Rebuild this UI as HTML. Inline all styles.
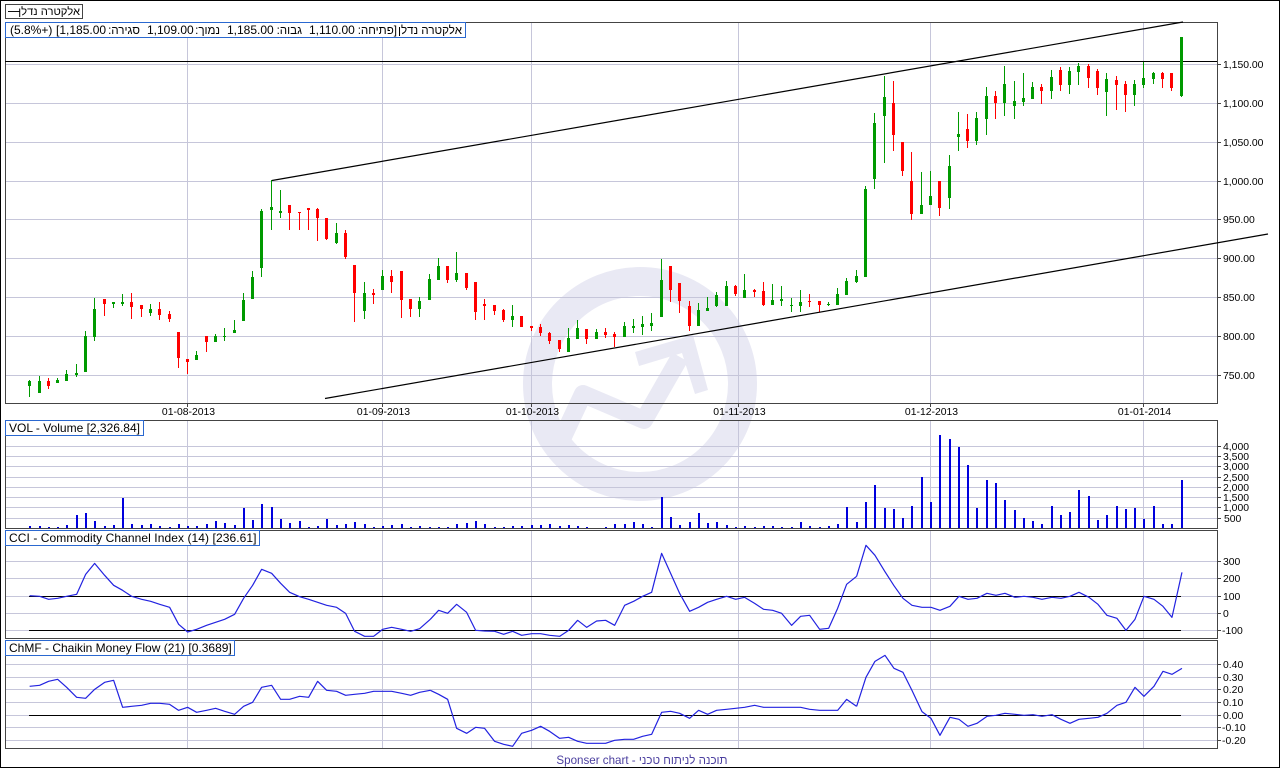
<!DOCTYPE html>
<html lang="he">
<head>
<meta charset="utf-8">
<title>Chart</title>
<style>
html,body{margin:0;padding:0;width:1280px;height:768px;overflow:hidden;background:#fff}
svg{display:block;position:absolute;left:0;top:0}
text{font-family:"Liberation Sans","Noto Sans CJK JP",sans-serif;font-size:10.4px;fill:#000;white-space:pre}
.lbl{font-size:12px}
.he{font-size:11.6px;direction:rtl;text-anchor:start}
.crisp{shape-rendering:crispEdges}
</style>
</head>
<body>
<svg width="1280" height="768" viewBox="0 0 1280 768" xmlns="http://www.w3.org/2000/svg">
<rect width="1280" height="768" fill="#fff"/>
<!-- watermark -->
<g fill="none" stroke="#e9e9f4">
<circle cx="640" cy="384" r="102.5" stroke-width="29"/>
<path d="M561 441L583 394L644 420L680 357" stroke-width="18" stroke-linejoin="round"/>
</g>
<path d="M635 352L693 335L708 390L695 394L682 353L639 366Z" fill="#e9e9f4"/>
<!-- grid -->
<g class="crisp" stroke="#c6c6da" stroke-width="1" fill="none">
<path d="M5 64.5H1217M5 103.5H1217M5 142.5H1217M5 181.5H1217M5 219.5H1217M5 258.5H1217M5 297.5H1217M5 336.5H1217M5 375.5H1217"/>
<path d="M5 446.5H1217M5 456.5H1217M5 466.5H1217M5 477.5H1217M5 487.5H1217M5 497.5H1217M5 507.5H1217M5 518.5H1217"/>
<path d="M5 561.5H1217M5 578.5H1217M5 596.5H1217M5 613.5H1217M5 630.5H1217"/>
<path d="M5 664.5H1217M5 677.5H1217M5 689.5H1217M5 702.5H1217M5 715.5H1217M5 727.5H1217M5 740.5H1217"/>
<path d="M187.5 22V403M382.5 22V403M531.5 22V403M738.5 22V403M930.5 22V403M1143.5 22V403"/>
<path d="M187.5 420V528M382.5 420V528M531.5 420V528M738.5 420V528M930.5 420V528M1143.5 420V528"/>
<path d="M187.5 530V638M382.5 530V638M531.5 530V638M738.5 530V638M930.5 530V638M1143.5 530V638"/>
<path d="M187.5 640V748M382.5 640V748M531.5 640V748M738.5 640V748M930.5 640V748M1143.5 640V748"/>
</g>
<!-- panels -->
<g class="crisp" fill="none" stroke="#444">
<rect x="5.5" y="22.5" width="1212" height="381"/>
<rect x="5.5" y="420.5" width="1212" height="108"/>
<rect x="5.5" y="530.5" width="1212" height="108"/>
<rect x="5.5" y="640.5" width="1212" height="108"/>
<path d="M1217 64.5h4M1217 103.5h4M1217 142.5h4M1217 181.5h4M1217 219.5h4M1217 258.5h4M1217 297.5h4M1217 336.5h4M1217 375.5h4"/>
<path d="M1217 446.5h4M1217 456.5h4M1217 466.5h4M1217 477.5h4M1217 487.5h4M1217 497.5h4M1217 507.5h4M1217 518.5h4"/>
<path d="M1217 561.5h4M1217 578.5h4M1217 596.5h4M1217 613.5h4M1217 630.5h4"/>
<path d="M1217 664.5h4M1217 677.5h4M1217 689.5h4M1217 702.5h4M1217 715.5h4M1217 727.5h4M1217 740.5h4"/>
<path d="M187.5 403v4M382.5 403v4M531.5 403v4M738.5 403v4M930.5 403v4M1143.5 403v4"/>
</g>
<!-- black lines -->
<g class="crisp" stroke="#000" fill="none">
<path d="M5 61.5H1217"/>
<path d="M29 596.5H1181M29 630.5H1181M29 715.5H1181"/>
</g>
<!-- green wicks -->
<path class="crisp" fill="none" stroke="#009900" stroke-width="1" d="M29.5 380V397M39.5 376V393M57.5 378V383M66.5 370V381M76.5 364V377M85.5 331V372M94.5 298V341M113.5 302V308M122.5 294V306M150.5 304V316M196.5 351V360M215.5 334V342M224.5 328V341M234.5 320V333M243.5 293V321M252.5 271V299M261.5 209V277M271.5 180V230M280.5 190V218M336.5 223V244M364.5 282V319M382.5 270V290M419.5 297V317M429.5 274V300M438.5 258V280M456.5 252V282M512.5 305V327M568.5 328V352M577.5 320V339M596.5 329V339M624.5 322V337M633.5 319V333M642.5 316V335M651.5 313V331M661.5 259V317M698.5 303V326M707.5 297V311M716.5 292V307M726.5 281V306M744.5 274V298M772.5 284V305M781.5 286V306M791.5 298V312M800.5 290V312M828.5 302V306M837.5 288V305M846.5 278V295M856.5 270V283M865.5 186V277M874.5 113V189M884.5 76V163M921.5 172V214M930.5 171V205M949.5 155V209M958.5 112V151M976.5 112V145M986.5 87V135M1004.5 66V116M1014.5 81V119M1023.5 73V106M1032.5 82V99M1051.5 70V99M1069.5 67V94M1078.5 63V85M1106.5 73V116M1134.5 80V106M1143.5 62V88M1153.5 72V84M1181.5 37V97"/>
<!-- green bodies -->
<path class="crisp" fill="none" stroke="#009900" stroke-width="3" d="M29.5 381V386M39.5 381V393M57.5 380V383M66.5 374V381M76.5 373V375M85.5 336V372M94.5 309V337M113.5 302V304M122.5 302V304M150.5 309V313M196.5 355V360M215.5 336V342M224.5 336V337M234.5 330V333M243.5 300V321M252.5 277V299M261.5 211V268M271.5 207V210M280.5 211V213M336.5 233V243M364.5 293V311M382.5 276V290M419.5 301V309M429.5 279V300M438.5 266V280M456.5 273V280M512.5 316V320M568.5 338V352M577.5 328V339M596.5 332V339M624.5 326V337M633.5 326V328M642.5 324V327M651.5 323V326M661.5 280V317M698.5 310V326M707.5 308V311M716.5 295V306M726.5 286V306M744.5 290V298M772.5 300V305M781.5 299V301M791.5 305V306M800.5 302V306M828.5 304V305M837.5 294V305M846.5 281V295M856.5 276V282M865.5 189V277M874.5 123V179M884.5 97V116M921.5 205V214M930.5 196V205M949.5 166V198M958.5 134V137M976.5 118V141M986.5 96V119M1004.5 84V103M1014.5 101V106M1023.5 98V102M1032.5 87V99M1051.5 77V91M1069.5 71V85M1078.5 66V72M1106.5 79V92M1134.5 84V95M1143.5 78V85M1153.5 73V79M1181.5 37V96"/>
<!-- red wicks -->
<path class="crisp" fill="none" stroke="#ff0000" stroke-width="1" d="M48.5 378V389M104.5 299V316M131.5 293V319M141.5 305V317M159.5 302V320M169.5 311V322M178.5 332V368M187.5 359V374M206.5 336V352M289.5 205V230M299.5 212V230M308.5 208V230M317.5 208V241M326.5 218V240M345.5 230V259M354.5 265V322M373.5 289V304M391.5 270V293M401.5 271V318M410.5 299V317M447.5 266V283M466.5 273V290M475.5 282V320M484.5 299V320M494.5 305V315M503.5 309V322M521.5 316V327M531.5 326V331M540.5 324V336M549.5 332V344M559.5 340V352M586.5 329V344M605.5 328V338M614.5 332V347M670.5 266V302M679.5 283V313M689.5 301V331M735.5 285V296M754.5 289V297M763.5 282V306M809.5 294V307M819.5 301V312M893.5 81V151M902.5 142V176M911.5 152V220M939.5 181V216M967.5 114V148M995.5 91V119M1041.5 84V104M1060.5 67V91M1088.5 64V88M1097.5 69V95M1116.5 76V110M1125.5 81V112M1162.5 72V88M1171.5 73V91"/>
<!-- red bodies -->
<path class="crisp" fill="none" stroke="#ff0000" stroke-width="3" d="M48.5 381V386M104.5 299V304M131.5 302V307M141.5 305V309M159.5 309V315M169.5 314V319M178.5 332V358M187.5 359V362M206.5 336V342M289.5 205V213M299.5 212V213M308.5 208V210M317.5 209V218M326.5 218V239M345.5 233V257M354.5 265V293M373.5 293V295M391.5 276V282M401.5 271V300M410.5 299V309M447.5 266V280M466.5 273V288M475.5 282V312M484.5 304V306M494.5 305V311M503.5 310V320M521.5 316V327M531.5 326V328M540.5 327V333M549.5 333V341M559.5 340V349M586.5 329V339M605.5 332V335M614.5 334V337M670.5 266V290M679.5 283V301M689.5 306V326M735.5 286V294M754.5 290V292M763.5 291V305M809.5 301V302M819.5 301V305M893.5 103V135M902.5 142V171M911.5 181V214M939.5 181V208M967.5 129V141M995.5 96V103M1041.5 87V91M1060.5 70V85M1088.5 66V78M1097.5 71V88M1116.5 80V85M1125.5 84V95M1162.5 73V79M1171.5 73V88"/>
<!-- trend lines -->
<g stroke="#000" stroke-width="1.2" fill="none">
<path d="M272 180.5L1183 22"/>
<path d="M325 398.5L1268 234"/>
</g>
<!-- volume bars -->
<path class="crisp" fill="none" stroke="#0000dd" stroke-width="2" d="M30 526V528M40 526V528M49 527V528M58 527V528M67 525V528M77 515V528M86 513V528M95 521V528M105 526V528M114 525V528M123 498V528M132 524V528M142 525V528M151 524V528M160 526V528M170 527V528M179 524V528M188 526V528M197 526V528M207 524V528M216 521V528M225 523V528M235 525V528M244 508V528M253 520V528M262 504V528M272 507V528M281 519V528M290 523V528M300 521V528M309 527V528M318 526V528M327 519V528M337 525V528M346 524V528M355 522V528M365 524V528M374 527V528M383 526V528M392 525V528M402 524V528M411 527V528M420 526V528M430 527V528M439 527V528M448 527V528M457 524V528M467 523V528M476 521V528M485 524V528M495 527V528M504 527V528M513 526V528M522 526V528M532 525V528M541 525V528M550 524V528M560 526V528M569 525V528M578 526V528M587 527V528M606 527V528M615 524V528M625 524V528M634 522V528M643 524V528M652 527V528M662 497V528M671 517V528M680 525V528M690 522V528M699 513V528M708 523V528M717 522V528M727 525V528M736 527V528M745 526V528M755 527V528M764 526V528M773 526V528M782 527V528M792 527V528M801 522V528M810 526V528M820 527V528M829 526V528M838 524V528M847 507V528M857 522V528M866 502V528M875 485V528M885 508V528M894 509V528M903 518V528M912 506V528M922 477V528M931 502V528M940 435V528M950 439V528M959 447V528M968 465V528M977 508V528M987 480V528M996 483V528M1005 500V528M1015 510V528M1024 518V528M1033 521V528M1042 524V528M1052 506V528M1061 515V528M1070 512V528M1079 490V528M1089 496V528M1098 520V528M1107 515V528M1117 506V528M1126 509V528M1135 508V528M1144 519V528M1154 506V528M1163 524V528M1172 524V528M1182 480V528"/>
<!-- CCI -->
<g fill="none" stroke="#2222e0" stroke-width="1.2" stroke-linejoin="round">
<polyline vector-effect="non-scaling-stroke" transform="translate(0.3 530) scale(0.33333)" points="88,197 118,199 145,208 172,205 199,199 229,193 256,133 283,100 313,136 340,166 367,181 394,199 424,208 451,214 478,223 508,232 535,283 562,306 589,298 619,286 646,277 673,268 703,253 730,205 757,166 784,118 814,130 841,160 868,187 898,200 925,208 952,217 979,226 1009,232 1036,250 1063,304 1093,319 1120,319 1147,298 1174,292 1204,298 1231,304 1258,296 1290,268"/>
<polyline vector-effect="non-scaling-stroke" transform="translate(430.3 530) scale(0.33333)" points="0,268 25,241 52,250 79,223 109,247 136,301 163,303 193,304 220,313 247,304 274,316 304,311 331,311 358,316 388,319 415,301 442,271 469,292 499,273 526,271 553,286 583,226 610,214 637,199 664,187 694,70 721,130 748,190 778,244 805,232 832,217 859,208 889,199 916,208 943,202 973,220 1000,238 1027,241 1054,250 1084,286 1111,259 1138,256 1168,298 1195,295 1222,235 1249,163 1279,139"/>
<polyline vector-effect="non-scaling-stroke" transform="translate(850.3 415) scale(0.33333)" points="19,484 47,391 74,421 104,470 131,512 158,550 185,571 215,577 242,577 269,586 299,574 326,544 353,553 380,550 410,535 437,541 464,535 494,547 521,544 548,547 575,553 605,547 632,550 659,544 686,532 716,547 743,568 770,601 800,610 827,646 854,613 881,544 911,553 938,574 965,607 995,472"/>
<!-- ChMF -->
<polyline vector-effect="non-scaling-stroke" transform="translate(0.3 530) scale(0.33333)" points="88,469 118,466 145,454 172,448 199,472 229,502 256,505 283,478 313,457 340,451 367,532 394,529 424,526 451,520 478,520 508,523 535,541 562,532 589,547 619,541 646,535 673,544 703,553 730,529 757,517 784,472 814,466 841,508 868,508 898,499 925,502 952,454 979,481 1009,484 1036,496 1063,493 1093,490 1120,484 1147,484 1174,484 1204,490 1231,496 1258,487 1290,481"/>
<polyline vector-effect="non-scaling-stroke" transform="translate(430.3 530) scale(0.33333)" points="0,481 25,493 52,508 79,595 109,610 136,592 163,595 193,634 220,643 247,649 274,610 304,601 331,589 358,604 388,625 415,622 442,634 469,640 499,640 526,640 553,631 583,628 610,628 637,619 664,613 694,547 721,544 748,550 778,565 805,541 832,553 859,541 889,538 916,535 943,532 973,526 1000,532 1027,532 1054,532 1084,532 1111,532 1138,538 1168,541 1195,541 1222,541 1249,508 1279,529"/>
<polyline vector-effect="non-scaling-stroke" transform="translate(850.3 640) scale(0.33333)" points="19,199 47,112 74,64 104,46 131,85 158,97 185,151 215,215 242,235 269,286 299,232 326,238 353,259 380,250 410,229 437,226 464,220 494,223 521,226 548,224 575,229 605,224 632,238 659,250 686,238 716,235 743,232 770,220 800,196 827,187 854,142 881,169 911,139 938,94 965,103 995,85"/>
</g>
<!-- axis labels -->
<text x="1223" y="68">1,150.00</text>
<text x="1223" y="107">1,100.00</text>
<text x="1223" y="146">1,050.00</text>
<text x="1223" y="185">1,000.00</text>
<text x="1223" y="223">950.00</text>
<text x="1223" y="262">900.00</text>
<text x="1223" y="301">850.00</text>
<text x="1223" y="340">800.00</text>
<text x="1223" y="379">750.00</text>
<text x="188.5" y="415" text-anchor="middle">01-08-2013</text>
<text x="383.5" y="415" text-anchor="middle">01-09-2013</text>
<text x="532.5" y="415" text-anchor="middle">01-10-2013</text>
<text x="739.5" y="415" text-anchor="middle">01-11-2013</text>
<text x="931.5" y="415" text-anchor="middle">01-12-2013</text>
<text x="1144.5" y="415" text-anchor="middle">01-01-2014</text>
<text x="1223" y="450">4,000</text>
<text x="1223" y="460">3,500</text>
<text x="1223" y="470">3,000</text>
<text x="1223" y="481">2,500</text>
<text x="1223" y="491">2,000</text>
<text x="1223" y="501">1,500</text>
<text x="1223" y="511">1,000</text>
<text x="1224" y="522">500</text>
<text x="1223" y="565">300</text>
<text x="1223" y="582">200</text>
<text x="1223" y="600">100</text>
<text x="1223" y="617">0</text>
<text x="1222" y="634">-100</text>
<text x="1223" y="668">0.40</text>
<text x="1223" y="681">0.30</text>
<text x="1223" y="693">0.20</text>
<text x="1223" y="706">0.10</text>
<text x="1223" y="719">0.00</text>
<text x="1222" y="731">-0.10</text>
<text x="1222" y="744">-0.20</text>
<!-- legend boxes -->
<g class="crisp">
<rect x="5.5" y="4.5" width="77" height="14" fill="#fff" stroke="#444"/>
<rect x="5.5" y="22.5" width="460" height="15" fill="#fff" stroke="#2a68d0"/>
<rect x="5.5" y="420.5" width="138" height="15" fill="#fff" stroke="#2a68d0"/>
<rect x="5.5" y="530.5" width="254" height="15" fill="#fff" stroke="#2a68d0"/>
<rect x="5.5" y="640.5" width="229" height="15" fill="#fff" stroke="#2a68d0"/>
<path d="M8 11.5H20" stroke="#111" fill="none"/>
</g>
<text class="he" x="80" y="15" style="font-size:11.2px">אלקטרה נדלן</text>
<text class="lbl" x="10" y="34">(5.8%+)</text>
<text class="lbl" x="56" y="34">[1,185.00</text>
<text class="he" x="140" y="34">סגירה:</text>
<text class="lbl" x="147" y="34">1,109.00</text>
<text class="he" x="220" y="34">נמוך:</text>
<text class="lbl" x="227" y="34">1,185.00</text>
<text class="he" x="302" y="34">גבוה:</text>
<text class="lbl" x="309" y="34">1,110.00</text>
<text class="he" x="397" y="34">[פתיחה:</text>
<text class="he" x="462" y="34">אלקטרה נדלן</text>
<text class="lbl" x="9" y="432">VOL - Volume [2,326.84]</text>
<text class="lbl" x="9" y="542" style="letter-spacing:.08px">CCI - Commodity Channel Index (14) [236.61]</text>
<text class="lbl" x="9" y="652">ChMF - Chaikin Money Flow (21) [0.3689]</text>
<text x="642" y="764" text-anchor="middle" style="font-size:11.6px;fill:#4b3f9f">Sponser chart - תוכנה לניתוח טכני</text>
<!-- outer frame -->
<rect class="crisp" x="0.5" y="0.5" width="1279" height="767" fill="none" stroke="#000"/>
</svg>
</body>
</html>
